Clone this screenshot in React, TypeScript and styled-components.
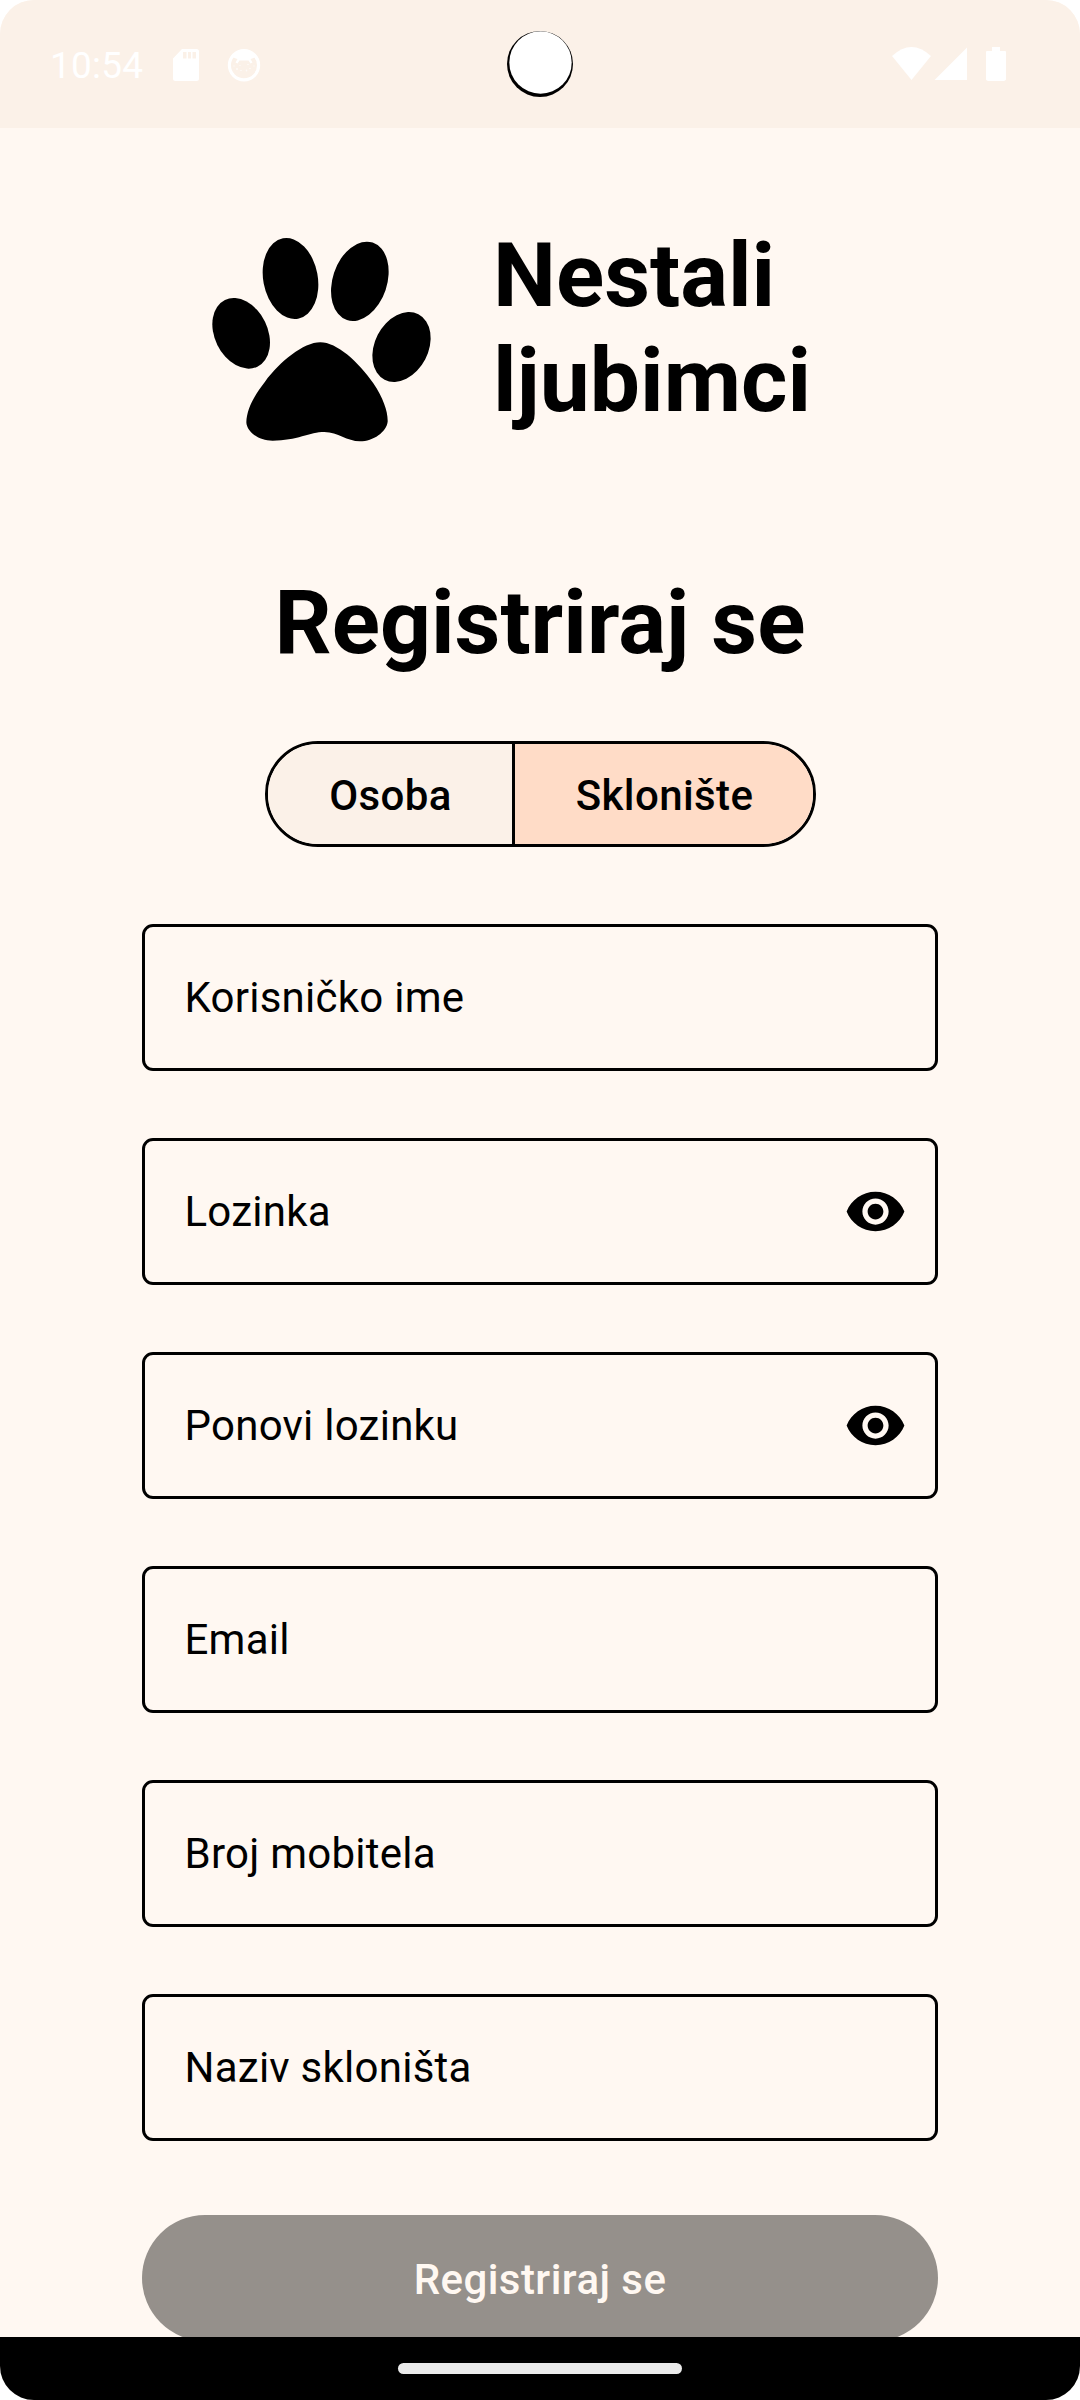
import React from "react";
import styled, { createGlobalStyle } from "styled-components";

const GlobalStyle = createGlobalStyle`
  html, body { margin: 0; padding: 0; background: #fff; }
  *, *::before, *::after { box-sizing: border-box; }
`;

const Phone = styled.div`
  display: flex;
  flex-direction: column;
  width: 1080px;
  height: 2400px;
  overflow: hidden;
  border-radius: 34px;
  background: #fff8f2;
  color: #000;
  font-family: Roboto, "Noto Sans", sans-serif;
`;

const StatusBar = styled.header`
  position: relative;
  display: flex;
  flex: none;
  justify-content: space-between;
  height: 128px;
  padding: 44px 74px 0 50px;
  background: #fbf1e8;
  color: #fff;
`;

const StatusGroup = styled.div`
  display: flex;
  align-items: flex-start;
`;

const Clock = styled.span`
  width: 121px;
  font-size: 37px;
  line-height: 43px;
  letter-spacing: 0.2px;
`;

const Camera = styled.svg`
  position: absolute;
  left: 506px;
  top: 30px;
`;

const Content = styled.main`
  display: flex;
  flex: 1;
  flex-direction: column;
  align-items: center;
  min-height: 0;
  overflow: hidden;
`;

const Brand = styled.div`
  display: flex;
  flex: none;
  width: 700px;
  height: 240px;
  margin-top: 92px;
  gap: 43px;
`;

const BrandName = styled.div`
  padding-top: 3px;
  font-size: 89.25px;
  font-weight: 700;
  line-height: 105px;
`;

const Heading = styled.h1`
  flex: none;
  margin: 110px 0 0;
  font-size: 89.25px;
  font-weight: 700;
  line-height: 105px;
`;

const Segmented = styled.div`
  display: flex;
  flex: none;
  width: 551px;
  height: 106px;
  margin-top: 66px;
  overflow: hidden;
  border: 3px solid #000;
  border-radius: 53px;
`;

const Segment = styled.button<{ $selected?: boolean; $width: number }>`
  width: ${(p) => p.$width}px;
  padding: 4px 0 0 2px;
  border: 0;
  border-right: ${(p) => (p.$selected ? "0" : "3px solid #000")};
  background: ${(p) => (p.$selected ? "#ffdcc7" : "#fbf1e8")};
  color: #000;
  font: 500 42px/60px Roboto, "Noto Sans", sans-serif;
  letter-spacing: 0.4px;
`;

const Form = styled.form`
  display: flex;
  flex: none;
  flex-direction: column;
  width: 796px;
  margin-top: 77px;
  gap: 67px;
`;

const Field = styled.label`
  display: flex;
  align-items: center;
  justify-content: space-between;
  height: 147px;
  padding: 0 28px 0 39.5px;
  border: 3px solid #000;
  border-radius: 11px;
  font-size: 42px;
  line-height: 63px;
  letter-spacing: 0.25px;
`;

const Submit = styled.button`
  height: 126px;
  margin-top: 7px;
  padding: 4px 0 0;
  border: 0;
  border-radius: 63px;
  background: #95908b;
  color: #fff8f2;
  font: 500 42px/60px Roboto, "Noto Sans", sans-serif;
  letter-spacing: 0.45px;
`;

const NavBar = styled.footer`
  display: flex;
  flex: none;
  justify-content: center;
  height: 63px;
  padding-top: 26px;
  background: #000;
`;

const NavHandle = styled.div`
  width: 284px;
  height: 11px;
  border-radius: 6px;
  background: #ebebeb;
`;

const Paw = () => (
  <svg width="260" height="240" viewBox="0 0 780 720">
    <ellipse cx="153.5" cy="340" rx="79.5" ry="111.3" transform="rotate(-25.9 153.5 340)" />
    <ellipse cx="301.5" cy="175.5" rx="81.8" ry="122.7" transform="rotate(-10.65 301.5 175.5)" />
    <ellipse cx="509.5" cy="184" rx="81.5" ry="122.4" transform="rotate(18.4 509.5 184)" />
    <ellipse cx="634.5" cy="381" rx="80.2" ry="110.6" transform="rotate(27.3 634.5 381)" />
    <path d="M391 367C440 367 505 425 550 490C580 535 594 575 593 605C590 635 550 664 510 664C470 664 445 636 403 636C360 636 320 662 248 662C205 662 170 635 169 607C170 570 190 530 225 485C270 425 340 367 391 367Z" />
  </svg>
);

const Eye = () => (
  <svg width="63" height="63" viewBox="0 0 24 24">
    <path d="M12 4.5C7 4.5 2.73 7.61 1 12c1.73 4.39 6 7.5 11 7.5s9.27-3.11 11-7.5c-1.73-4.39-6-7.5-11-7.5zM12 17c-2.76 0-5-2.24-5-5s2.24-5 5-5 5 2.24 5 5-2.24 5-5 5zm0-8c-1.66 0-3 1.34-3 3s1.34 3 3 3 3-1.34 3-3-1.34-3-3-3z" />
  </svg>
);

const NotificationIcons = () => (
  <svg width="96" height="42" viewBox="171 44 96 42">
    <path
      fill="#fff"
      fillRule="evenodd"
      d="M182 49H196.500Q199 49 199 51.500V78.500Q199 81 196.500 81H175.500Q173 81 173 78.500V58.500ZM183 52V58.500H186.500V52ZM188 52V58.500H191V52ZM192.500 52V58.500H196V52Z"
    />
    <circle cx="244" cy="65.300" r="14.600" fill="none" stroke="#fff" strokeWidth="3.200" />
    <path
      fill="#fff"
      d="M231 59Q235 50 244 50Q253 50 257 59L254.500 57.500Q252 58.500 250.500 59L252.500 62.500L250.500 63.500L248.500 60.500H239.500L237.500 63.500L235.500 62.500L237.500 59Q235 58 233.500 57.500Z"
    />
    <g fill="#fff" opacity="0.7">
      <circle cx="237" cy="69" r="1" />
      <circle cx="234" cy="66" r="0.700" />
      <circle cx="241" cy="70.500" r="0.800" />
      <circle cx="240" cy="65.500" r="0.700" />
      <circle cx="246.500" cy="70.500" r="0.900" />
      <circle cx="248" cy="64.500" r="0.800" />
      <circle cx="250" cy="68.500" r="0.800" />
      <circle cx="254" cy="66" r="0.700" />
    </g>
  </svg>
);

const SystemIcons = () => (
  <svg width="116" height="42" viewBox="890 44 116 42" fill="#fff">
    <path d="M892 56Q911.500 38 931 56L911.500 80Z" />
    <path d="M967 47.500V80H934.500Z" />
    <path d="M992 47H1000V51H1005Q1006 51 1006 52V79.500Q1006 80 1004 81H988Q986 80 986 79.500V52Q986 51 987 51H992Z" />
  </svg>
);

const fields = [
  { label: "Korisničko ime" },
  { label: "Lozinka", secret: true },
  { label: "Ponovi lozinku", secret: true },
  { label: "Email" },
  { label: "Broj mobitela" },
  { label: "Naziv skloništa" },
];

export default function App() {
  return (
    <>
      <GlobalStyle />
      <Phone>
        <StatusBar>
          <StatusGroup>
            <Clock>10:54</Clock>
            <NotificationIcons />
          </StatusGroup>
          <Camera width="68" height="68" viewBox="506 30 68 68">
            <circle cx="540" cy="64" r="33" />
            <circle cx="540.500" cy="62.500" r="31.200" fill="#fff" />
          </Camera>
          <SystemIcons />
        </StatusBar>
        <Content>
          <Brand>
            <Paw />
            <BrandName>
              Nestali
              <br />
              ljubimci
            </BrandName>
          </Brand>
          <Heading>Registriraj se</Heading>
          <Segmented>
            <Segment type="button" $width={247}>Osoba</Segment>
            <Segment type="button" $width={298} $selected>Sklonište</Segment>
          </Segmented>
          <Form>
            {fields.map((f) => (
              <Field key={f.label}>
                <span>{f.label}</span>
                {f.secret && <Eye />}
              </Field>
            ))}
            <Submit type="button">Registriraj se</Submit>
          </Form>
        </Content>
        <NavBar>
          <NavHandle />
        </NavBar>
      </Phone>
    </>
  );
}
